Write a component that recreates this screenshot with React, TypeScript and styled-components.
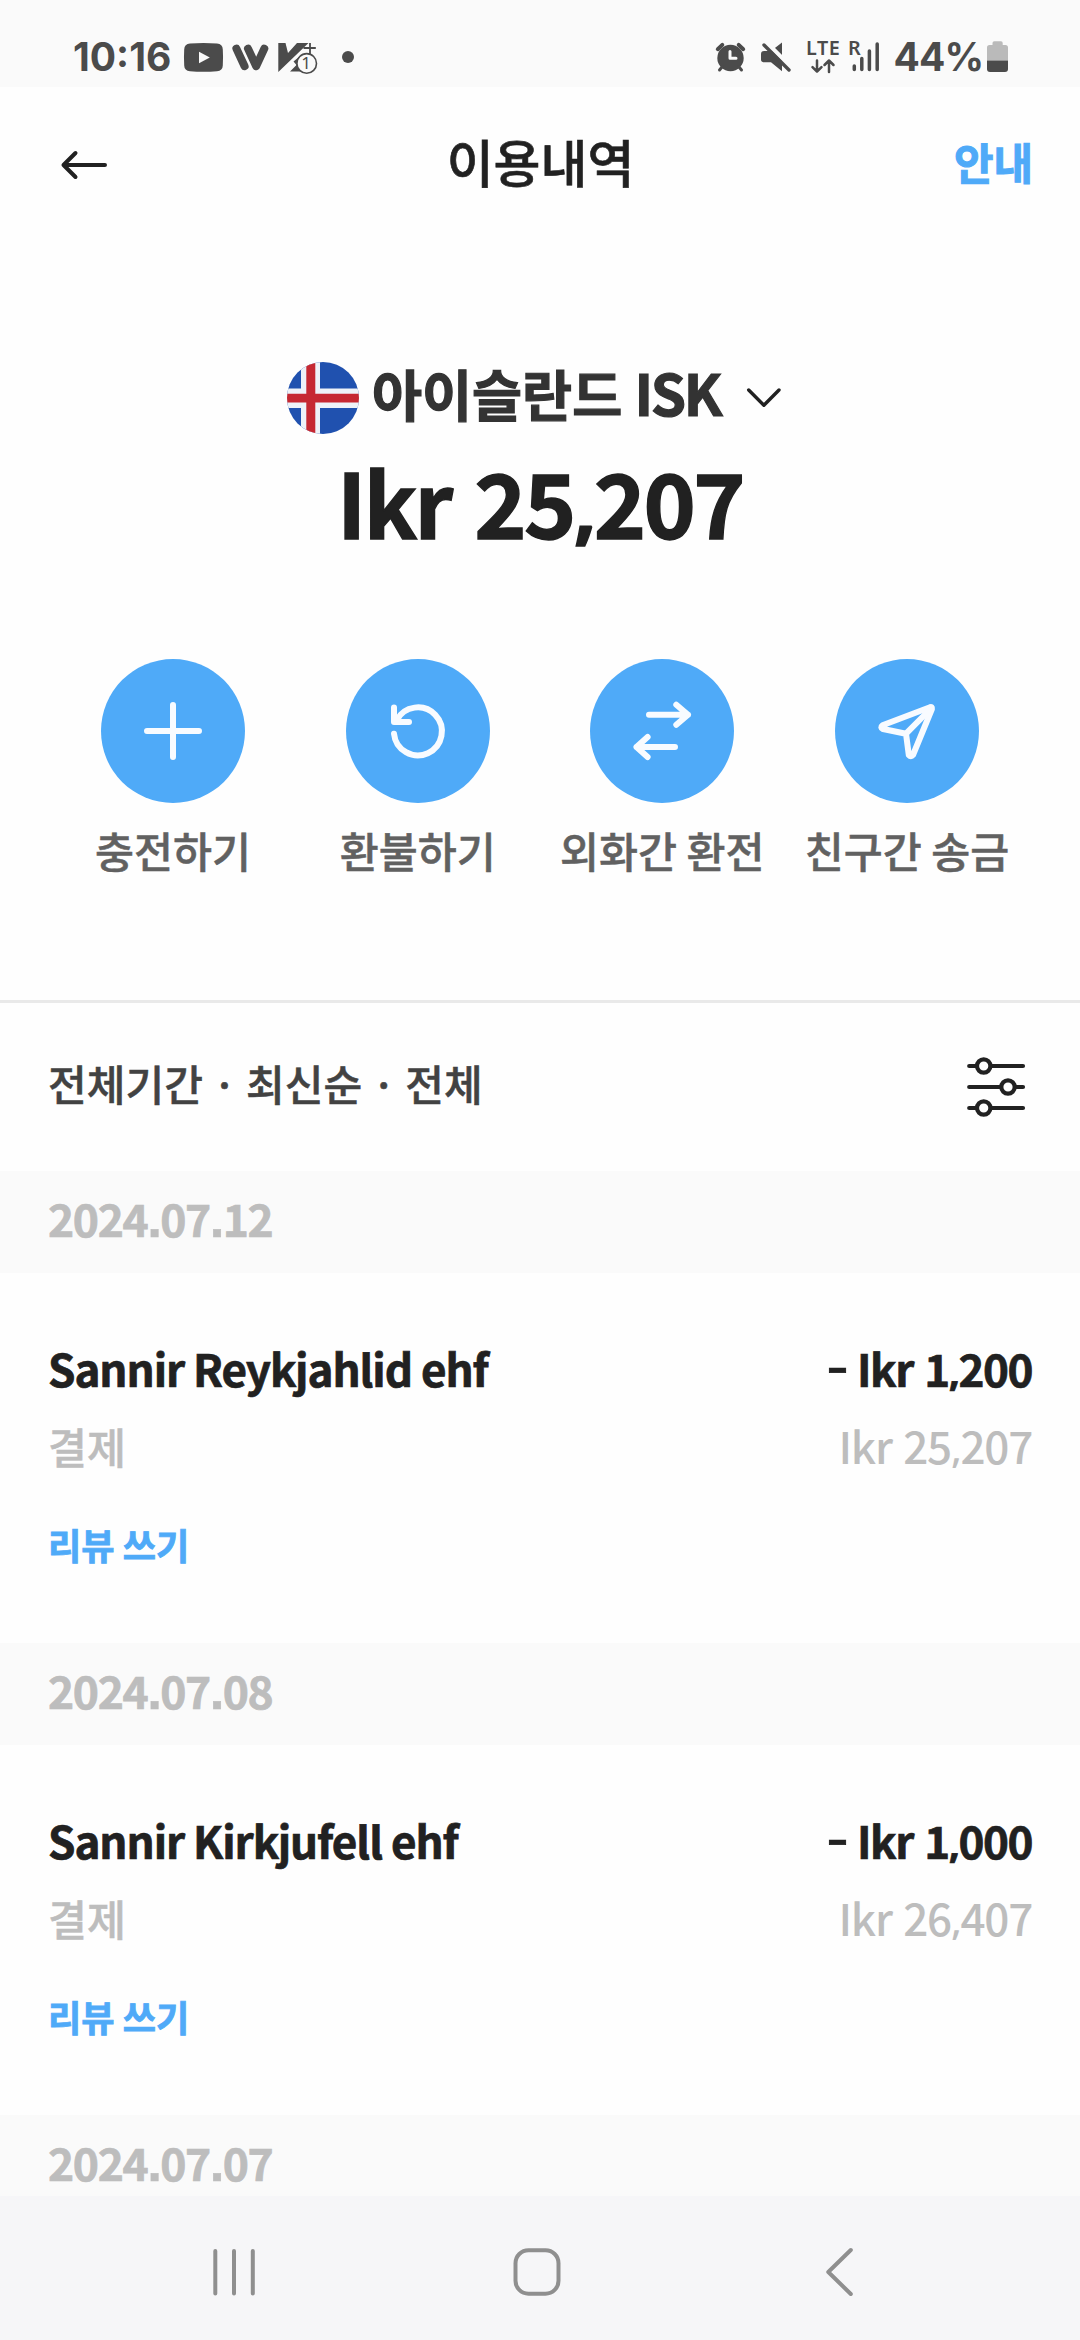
import React from "react";
import styled, { createGlobalStyle } from "styled-components";

const KR = '"Noto Sans CJK KR", sans-serif';
const INK = "#212121";
const BLUE = "#4faaf8";
const STATUS = "#4b4b4b";
const WHITE = "#f8fbff";

const GlobalStyle = createGlobalStyle`
  * { box-sizing: border-box; }
  body { margin: 0; background: #fefefe; }
  button { border: 0; padding: 0; margin: 0; background: none; font: inherit; color: inherit; }
`;

const Screen = styled.div`
  width: 1080px;
  height: 2340px;
  display: flex;
  flex-direction: column;
  overflow: hidden;
  background: #fefefe;
  font-family: ${KR};
  color: ${INK};
  white-space: nowrap;
  svg { display: block; flex: none; overflow: visible; }
`;

/* Status bar */
const StatusBar = styled.div`
  height: 87px;
  flex: none;
  padding: 36px 72px 0 73px;
  display: flex;
  justify-content: space-between;
  align-items: flex-start;
  background: #fafafa;
`;
const StatusGroup = styled.div`
  display: flex;
  align-items: flex-start;
`;
const StatusText = styled.span<{ $width: number; $spacing: number }>`
  width: ${(p) => p.$width}px;
  font-family: Inter, sans-serif;
  font-weight: 650;
  font-size: 39px;
  line-height: 41px;
  letter-spacing: ${(p) => p.$spacing}px;
  color: ${STATUS};
`;
const Gap = styled.span<{ $w: number }>`
  width: ${(p) => p.$w}px;
  flex: none;
`;

/* Header */
const Header = styled.header`
  height: 146px;
  flex: none;
  padding: 0 47px 0 60px;
  display: grid;
  grid-template-columns: 1fr auto 1fr;
  align-items: center;
`;
const BackButton = styled.button`
  justify-self: start;
  padding-top: 10px;
`;
const Title = styled.h1`
  margin: 2px 12px 0 0;
  font-weight: 500;
  font-size: 51px;
  line-height: 60px;
  -webkit-text-stroke: 0.012em currentColor;
`;
const GuideLink = styled.button`
  justify-self: end;
  padding-top: 2px;
  font-weight: 700;
  font-size: 43px;
  line-height: 60px;
  color: ${BLUE};
  -webkit-text-stroke: 0.024em currentColor;
`;

/* Balance */
const Hero = styled.section`
  flex: none;
  padding: 129px 0 119px;
  border-bottom: 3px solid #e9e9e9;
`;
const CurrencyRow = styled.div`
  height: 72px;
  display: flex;
  justify-content: center;
  align-items: flex-start;
`;
const CurrencyName = styled.span`
  width: 352px;
  margin-left: 13px;
  padding-top: 1px;
  font-weight: 700;
  font-size: 54.4px;
  line-height: 60px;
  color: #333;
  -webkit-text-stroke: 0.022em currentColor;
`;
const Latin = styled.span`
  font-size: 56.6px;
  line-height: 0;
  letter-spacing: -2.4px;
`;
const Balance = styled.div`
  margin-top: 17px;
  text-align: center;
  font-weight: 700;
  font-size: 88.7px;
  line-height: 100px;
  letter-spacing: -2.6px;
  word-spacing: 6px;
  -webkit-text-stroke: 0.016em currentColor;
`;
const Actions = styled.div`
  margin-top: 108px;
  padding: 0 50.6px;
  display: grid;
  grid-template-columns: repeat(4, 1fr);
`;
const Action = styled.button`
  display: flex;
  flex-direction: column;
  align-items: center;
`;
const ActionCircle = styled.span`
  width: 144px;
  height: 144px;
  border-radius: 50%;
  background: ${BLUE};
`;
const ActionLabel = styled.span`
  margin-top: 17px;
  margin-bottom: 1px;
  font-weight: 500;
  font-size: 42.4px;
  line-height: 60px;
  color: #616161;
  -webkit-text-stroke: 0.012em currentColor;
`;

/* History */
const FilterBar = styled.div`
  height: 168px;
  flex: none;
  padding: 0 48px;
  display: flex;
  align-items: center;
  justify-content: space-between;
`;
const FilterText = styled.span`
  padding-bottom: 8px;
  font-weight: 500;
  font-size: 42.1px;
  line-height: 60px;
  color: #424242;
  -webkit-text-stroke: 0.012em currentColor;
`;
const List = styled.main`
  flex: 1;
  min-height: 0;
  overflow: hidden;
`;
const DateBand = styled.div`
  height: 102px;
  padding: 0 48px 9px;
  display: flex;
  align-items: center;
  background: #fafafa;
  font-weight: 700;
  font-size: 44.4px;
  line-height: 60px;
  letter-spacing: -1.35px;
  color: #bdbdbd;
  -webkit-text-stroke: 0.016em currentColor;
`;
const Entry = styled.article`
  height: 370px;
  padding: 63px 48px 0;
`;
const Line = styled.div`
  height: 64px;
  display: flex;
  justify-content: space-between;
  line-height: 64px;
  & + & { margin-top: 13px; }
`;
const Merchant = styled.span`
  font-weight: 700;
  font-size: 44px;
  letter-spacing: -1.05px;
  -webkit-text-stroke: 0.016em currentColor;
`;
const Amount = styled.span`
  font-weight: 700;
  font-size: 44px;
  letter-spacing: -1.5px;
  word-spacing: 3px;
  -webkit-text-stroke: 0.016em currentColor;
`;
const Minus = styled.span`
  display: inline-block;
  transform: translateY(-4px) scaleX(1.35);
  margin-right: 2px;
`;
const Kind = styled.span`
  padding-top: 1px;
  font-weight: 500;
  font-size: 42.4px;
  color: #bdbdbd;
  -webkit-text-stroke: 0.012em currentColor;
`;
const Remaining = styled.span`
  font-weight: 500;
  font-size: 44px;
  letter-spacing: -1.25px;
  word-spacing: 3px;
  color: #bdbdbd;
`;
const Review = styled.button`
  display: block;
  margin-top: 42px;
  font-weight: 700;
  font-size: 36.2px;
  line-height: 50px;
  color: ${BLUE};
  -webkit-text-stroke: 0.022em currentColor;
`;
/* Short slanted comma and square full stop used between digits */
const Comma = styled.span`
  font-family: "Noto Sans", sans-serif;
  font-size: 0.9em;
  line-height: 0;
  vertical-align: 0.035em;
`;
const Stop = styled.span`
  font-family: "Liberation Sans", sans-serif;
  font-size: 1.15em;
  line-height: 0;
`;
const DateText = styled.span``;

const Money = ({ value }: { value: string }) => {
  const [head, tail] = value.split(",");
  return <>{head}<Comma>,</Comma>{tail}</>;
};
const DateLabel = ({ value }: { value: string }) => {
  const [y, m, d] = value.split(".");
  return <DateText>{y}<Stop>.</Stop>{m}<Stop>.</Stop>{d}</DateText>;
};

/* System navigation */
const NavBar = styled.nav`
  height: 144px;
  flex: none;
  padding: 8px 217px 0 210px;
  display: flex;
  align-items: center;
  justify-content: space-between;
  background: #f6f6f8;
`;

const YoutubeIcon = () => (
  <svg width="39" height="40" viewBox="184 36 39 40">
    <path d="M190 43.6Q203.500 42.400 217 43.600Q222.600 44 222.800 49.500Q223.300 57.400 222.800 65.500Q222.600 70.800 217 71.200Q203.500 72.300 190 71.200Q184.400 70.800 184.200 65.500Q183.700 57.400 184.200 49.500Q184.400 44 190 43.600Z" fill={STATUS} />
    <path d="M199 51.800V63.200L209.800 57.500Z" fill="#fafafa" />
  </svg>
);
const WaveIcon = () => (
  <svg width="37" height="40" viewBox="232 36 37 40" fill="none" strokeLinecap="round" strokeLinejoin="round">
    <path d="M236.400 48.600L244.600 66.200" stroke={STATUS} strokeWidth="8" />
    <path d="M248 48.600L256.200 66.200L264.300 48.600" stroke="#fafafa" strokeWidth="9.600" />
    <path d="M248 48.600L256.200 66.200L264.300 48.600" stroke={STATUS} strokeWidth="8" />
  </svg>
);
const VaccineIcon = () => (
  <svg width="40" height="40" viewBox="278 36 40 40">
    <path d="M278.300 43H285.500L288 53L297 43H308.500L278.300 72Z" fill={STATUS} />
    <path d="M290 71.500L296.500 65L293.500 61.500L299 57L304 60V71.500Z" fill={STATUS} />
    <path d="M303.500 48H315.800M310 43V54" stroke={STATUS} strokeWidth="1.800" />
    <circle cx="306.700" cy="63.400" r="9.800" fill="#fafafa" stroke={STATUS} strokeWidth="1.600" />
    <text x="306.200" y="69.200" textAnchor="middle" fontFamily="Noto Sans, sans-serif" fontSize="17" fill={STATUS}>1</text>
  </svg>
);
const MoreDot = () => (
  <svg width="12" height="40" viewBox="342 36 12 40">
    <circle cx="348" cy="57" r="6" fill={STATUS} />
  </svg>
);
const AlarmIcon = () => (
  <svg width="30" height="40" viewBox="715 36 30 40" fill="none" strokeLinecap="round">
    <circle cx="730.500" cy="58" r="13.200" fill={STATUS} />
    <path d="M717.800 49.200L722.300 44.900M738.700 44.900L743.200 49.200" stroke={STATUS} strokeWidth="4" />
    <path d="M722 67L719.500 70M739 67L741.500 70" stroke={STATUS} strokeWidth="3" />
    <path d="M730 51.500V58.200H736" stroke="#fafafa" strokeWidth="3" strokeLinejoin="round" />
  </svg>
);
const MuteIcon = () => (
  <svg width="31" height="40" viewBox="760 36 31 40" fill="none" strokeLinecap="round">
    <path d="M764 51H771L782 42.600V71.200L771 62.300H764Q761 62.300 761 59.500V54Q761 51 764 51Z" fill={STATUS} />
    <path d="M766.500 42.500L790 66" stroke="#fafafa" strokeWidth="4.500" />
    <path d="M764 45L789 70" stroke={STATUS} strokeWidth="3.400" />
  </svg>
);
const LteIcon = () => (
  <svg width="36" height="40" viewBox="805 36 36 40" fill="none" strokeLinecap="round" strokeLinejoin="round">
    <text x="806" y="55.300" fontFamily="Noto Sans, sans-serif" fontWeight="600" fontSize="19.800" letterSpacing="0.500" fill={STATUS}>LTE</text>
    <path d="M817 60.500V71.500M812.500 67.200L817 71.700L821.500 67.200M829 72V60.800M824.500 65L829 60.500L833.500 65" stroke={STATUS} strokeWidth="2.500" />
  </svg>
);
const SignalIcon = () => (
  <svg width="32" height="40" viewBox="848 36 32 40" fill="none" strokeLinecap="round">
    <text x="848" y="55.300" fontFamily="Noto Sans, sans-serif" fontWeight="600" fontSize="19.800" fill={STATUS}>R</text>
    <path d="M854.300 66V69.400M861.800 58.500V69.400M869.400 51V69.400M877.200 44V69.400" stroke={STATUS} strokeWidth="3.500" />
  </svg>
);
const BatteryIcon = () => (
  <svg width="21" height="40" viewBox="987 36 21 40">
    <path d="M987 60.500V47.500Q987 45 989.500 45H992.500V43Q992.500 41.300 994.300 41.300H1001Q1002.700 41.300 1002.700 43V45H1005.500Q1008 45 1008 47.500V60.500Z" fill="#bababa" />
    <path d="M987 60.500H1008V69Q1008 72 1005 72H990Q987 72 987 69Z" fill={STATUS} />
  </svg>
);

const BackArrow = () => (
  <svg width="50" height="36" viewBox="60 147 50 36" fill="none" stroke={INK} strokeWidth="4" strokeLinecap="round" strokeLinejoin="round">
    <path d="M105 165H63.500M75.500 153L63.500 165L75.500 177" />
  </svg>
);
const IcelandFlag = () => (
  <svg width="72" height="72" viewBox="0 0 72 72">
    <clipPath id="flagDisc"><circle cx="36" cy="36" r="36" /></clipPath>
    <g clipPath="url(#flagDisc)">
      <rect width="72" height="72" fill="#2051af" />
      <path d="M14 0h19v72h-19zM0 26.500h72v19.400h-72z" fill="#eef2f8" />
      <path d="M19.300 0h9v72h-9zM0 31.700h72v8.800h-72z" fill="#c62832" />
    </g>
  </svg>
);
const ChevronDown = () => (
  <svg width="69" height="72" viewBox="724 362 69 72" fill="none" stroke={INK} strokeWidth="3.400" strokeLinecap="round" strokeLinejoin="round">
    <path d="M748.700 390L763.900 405.300L779 390" />
  </svg>
);
const FilterIcon = () => (
  <svg width="65" height="64" viewBox="967 1055 65 64" fill="#fefefe" stroke={INK} strokeWidth="4.200" strokeLinecap="round">
    <path d="M969.200 1066H1023M969.200 1087H1023M969.200 1108H1023" />
    <circle cx="983.700" cy="1066" r="6.700" />
    <circle cx="1008" cy="1087" r="6.700" />
    <circle cx="983.700" cy="1108" r="6.700" />
  </svg>
);

const actions = [
  { label: "충전하기", paths: ["M72 46V98M46 72H98"] },
  { label: "환불하기", paths: ["M48 74.800A24 24 0 1 0 50.600 61.300", "M48 48.500V63H63"] },
  { label: "외화간 환전", paths: ["M59 55.700H98M86.300 45.700L98 55.700L86.300 65.700", "M85 88H46.500M57.600 78L46.500 88L57.600 98"] },
  {
    label: "친구간 송금",
    paths: ["M95 48.200L47.500 66.300Q44.800 68.300 48 70L71 74.700L73.800 96Q76 98.600 78 96L96.900 50Q97.200 47.500 95 48.200Z", "M71 74.700L94 51.500"],
  },
];

const history = [
  { date: "2024.07.12", name: "Sannir Reykjahlid ehf", amount: "Ikr 1,200", remaining: "Ikr 25,207" },
  { date: "2024.07.08", name: "Sannir Kirkjufell ehf", amount: "Ikr 1,000", remaining: "Ikr 26,407" },
];

export default function App() {
  return (
    <Screen>
      <GlobalStyle />
      <StatusBar>
        <StatusGroup>
          <StatusText $width={111} $spacing={0}>10:16</StatusText>
          <YoutubeIcon />
          <Gap $w={9} />
          <WaveIcon />
          <Gap $w={9} />
          <VaccineIcon />
          <Gap $w={24} />
          <MoreDot />
        </StatusGroup>
        <StatusGroup>
          <AlarmIcon />
          <Gap $w={15} />
          <MuteIcon />
          <Gap $w={14} />
          <LteIcon />
          <Gap $w={7} />
          <SignalIcon />
          <Gap $w={13.5} />
          <StatusText $width={93.5} $spacing={-0.9}>44%</StatusText>
          <BatteryIcon />
        </StatusGroup>
      </StatusBar>

      <Header>
        <BackButton aria-label="뒤로"><BackArrow /></BackButton>
        <Title>이용내역</Title>
        <GuideLink>안내</GuideLink>
      </Header>

      <Hero>
        <CurrencyRow>
          <IcelandFlag />
          <CurrencyName>아이슬란드 <Latin>ISK</Latin></CurrencyName>
          <ChevronDown />
        </CurrencyRow>
        <Balance><Money value="Ikr 25,207" /></Balance>
        <Actions>
          {actions.map((a) => (
            <Action key={a.label}>
              <ActionCircle>
                <svg width="144" height="144" fill="none" stroke={WHITE} strokeWidth="6" strokeLinecap="round" strokeLinejoin="round">
                  {a.paths.map((d) => <path key={d} d={d} />)}
                </svg>
              </ActionCircle>
              <ActionLabel>{a.label}</ActionLabel>
            </Action>
          ))}
        </Actions>
      </Hero>

      <FilterBar>
        <FilterText>전체기간 · 최신순 · 전체</FilterText>
        <FilterIcon />
      </FilterBar>

      <List>
        {history.map((h) => (
          <section key={h.date}>
            <DateBand><DateLabel value={h.date} /></DateBand>
            <Entry>
              <Line>
                <Merchant>{h.name}</Merchant>
                <Amount><Minus>-</Minus> <Money value={h.amount} /></Amount>
              </Line>
              <Line>
                <Kind>결제</Kind>
                <Remaining><Money value={h.remaining} /></Remaining>
              </Line>
              <Review>리뷰 쓰기</Review>
            </Entry>
          </section>
        ))}
        <DateBand><DateLabel value="2024.07.07" /></DateBand>
      </List>

      <NavBar>
        <svg width="48" height="50" viewBox="210 2247 48 50" fill="none" stroke="#8f8f8f" strokeWidth="4" strokeLinecap="round">
          <path d="M215.300 2251V2293.500M234 2251V2293.500M252.800 2251V2293.500" />
        </svg>
        <svg width="48" height="50" viewBox="512 2247 48 50" fill="none" stroke="#8f8f8f" strokeWidth="4">
          <rect x="514.500" y="2250.200" width="43" height="43.500" rx="13" />
        </svg>
        <svg width="48" height="50" viewBox="815 2247 48 50" fill="none" stroke="#8f8f8f" strokeWidth="4" strokeLinecap="round" strokeLinejoin="round">
          <path d="M850.800 2250L828.300 2272L850.800 2294" />
        </svg>
      </NavBar>
    </Screen>
  );
}
